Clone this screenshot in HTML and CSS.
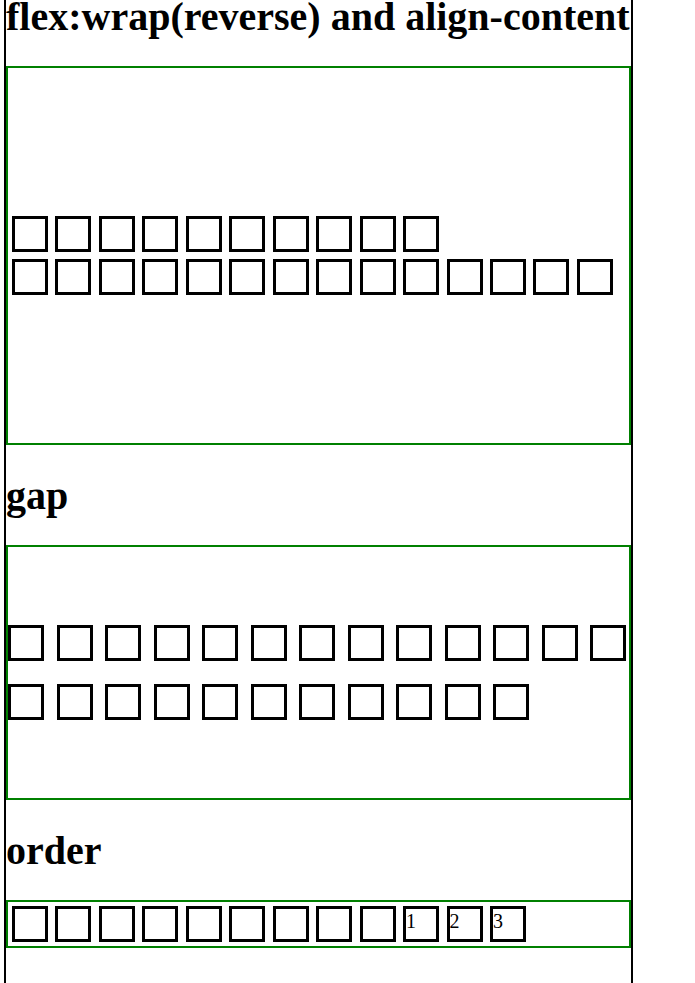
FILE: index.html
```html
<!DOCTYPE html>
<html lang="en">
<head>
<meta charset="utf-8">
<title>Flexbox</title>
<link rel="stylesheet" href="styles.css">
</head>
<body>
<main class="page">
  <h1>flex:wrap(reverse) and align-content</h1>
  <div class="container wrap">
    <div class="item"></div><div class="item"></div><div class="item"></div><div class="item"></div><div class="item"></div>
    <div class="item"></div><div class="item"></div><div class="item"></div><div class="item"></div><div class="item"></div>
    <div class="item row-start"></div><div class="item"></div><div class="item"></div><div class="item"></div><div class="item"></div>
    <div class="item"></div><div class="item"></div><div class="item"></div><div class="item"></div><div class="item"></div>
    <div class="item"></div><div class="item"></div><div class="item"></div><div class="item"></div>
  </div>
  <h1>gap</h1>
  <div class="container gap">
    <div class="item"></div><div class="item"></div><div class="item"></div><div class="item"></div><div class="item"></div>
    <div class="item"></div><div class="item"></div><div class="item"></div><div class="item"></div><div class="item"></div>
    <div class="item"></div><div class="item"></div><div class="item"></div><div class="item"></div><div class="item"></div>
    <div class="item"></div><div class="item"></div><div class="item"></div><div class="item"></div><div class="item"></div>
    <div class="item"></div><div class="item"></div><div class="item"></div><div class="item"></div>
  </div>
  <h1>order</h1>
  <div class="container order">
    <div class="item"></div><div class="item"></div><div class="item"></div><div class="item"></div><div class="item"></div>
    <div class="item"></div><div class="item"></div><div class="item"></div><div class="item"></div>
    <div class="item">1</div><div class="item">2</div><div class="item">3</div>
  </div>
</main>
</body>
</html>
```
FILE: styles.css
```css
* {
  box-sizing: border-box;
}

body {
  margin: 0;
  background: #fff;
  color: #000;
  font: 20px/24px "Liberation Serif", "Times New Roman", serif;
}

.page {
  display: flow-root;
  min-height: calc(100vh + 34px);
  margin: -34px 62px 0 4px;
  border: solid #000;
  border-width: 0 2px;
}

h1 {
  margin: 28px 0 26px;
  font-size: 40px;
  line-height: 46px;
  white-space: nowrap;
}

.container {
  display: grid;
  grid-template-columns: repeat(14, 36px);
  justify-content: space-between;
  align-content: center;
  row-gap: 7px;
  padding: 4px 16px 4px 4px;
  border: 2px solid green;
}

.wrap {
  min-height: 379px;
}

.row-start {
  grid-column-start: 1;
}

.gap {
  grid-template-columns: repeat(13, 36px);
  row-gap: 23px;
  min-height: 255px;
  padding: 0 3px 0 0;
}

.item {
  width: 36px;
  height: 36px;
  border: 3px solid #000;
}
```
